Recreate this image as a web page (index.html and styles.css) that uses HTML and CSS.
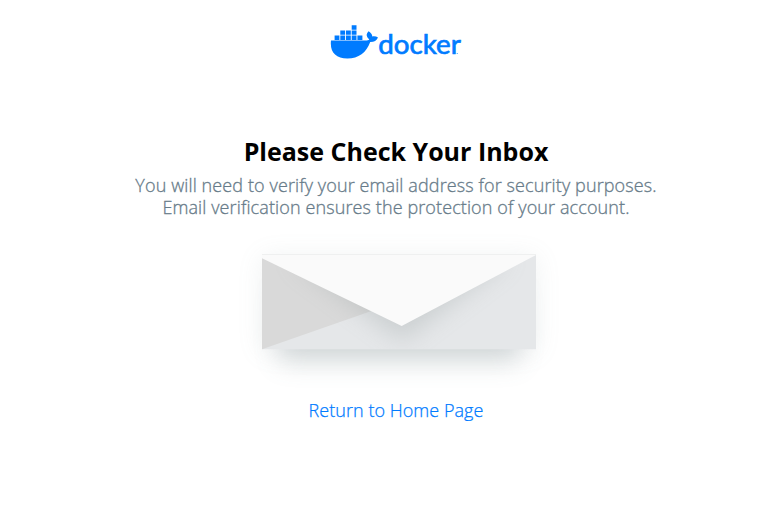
FILE: index.html
```html
<!DOCTYPE html>
<html lang="en">
<head>
<meta charset="utf-8">
<title>Please Check Your Inbox</title>
<link rel="stylesheet" href="styles.css">
</head>
<body>
<main class="page">
  <svg class="logo" width="132" height="36" viewBox="330 24 132 36" role="img" aria-label="docker">
    <g class="brand">
      <path d="M331 40.5H365.5C367.2 40.5 368.6 40.1 369.3 39.5C366 36.6 365.9 34.2 368.6 31.2C371.1 32.6 372.2 34.6 372.3 36.5C374.2 36 376.3 36.4 378 37.5C376.6 40.7 374 42.1 370.2 42C366.4 52.7 358.6 58.5 347.4 58.5C335.6 58.5 329.7 52 331 40.5Z"/>
      <path d="M334.6 35.5h4.8v4.5h-4.8zM340.3 35.5h4.8v4.5h-4.8zM346 35.5h4.8v4.5H346zM351.7 35.5h4.8v4.5h-4.8zM357.4 35.5h5v4.5h-5zM340.3 30.4h4.8v4.4h-4.8zM346 30.4h4.8v4.4H346zM351.7 30.4h4.8v4.4h-4.8zM351.7 25.3h4.8v4.4h-4.8z"/>
      <text class="wordmark" x="378.3" y="54" textLength="82.5" lengthAdjust="spacingAndGlyphs">docker</text>
      <circle cx="457.2" cy="53.6" r=".5"/>
    </g>
  </svg>
  <h1 class="title">Please Check Your Inbox</h1>
  <p class="message">You will need to verify your email address for security purposes.<br>Email verification ensures the protection of your account.</p>
  <svg class="envelope" width="340" height="170" viewBox="230 230 340 170" aria-hidden="true">
    <defs>
      <filter id="soft" x="-30%" y="-60%" width="160%" height="220%"><feGaussianBlur stdDeviation="13"/></filter>
      <filter id="fold" x="-30%" y="-60%" width="160%" height="220%"><feGaussianBlur stdDeviation="12"/></filter>
      <clipPath id="body"><path d="M262 254H536V349H262Z"/></clipPath>
    </defs>
    <path class="halo" filter="url(#soft)" d="M262 257H536V352H262Z"/>
    <path class="shadow" filter="url(#soft)" d="M279 290H519V362H279Z"/>
    <path class="back" d="M262 254H536V349.3H262Z"/>
    <path class="side" d="M262 254V349.3L380 308Z"/>
    <g clip-path="url(#body)"><path class="fold-shadow" filter="url(#fold)" d="M289 257H512L402 341Z"/></g>
    <path class="flap" d="M262 254H536V255L401.7 326L262 258.3Z"/>
    <path class="edge" d="M262 254.5H536"/>
  </svg>
  <a class="home-link" href="#">Return to Home Page</a>
</main>
</body>
</html>
```
FILE: styles.css
```css
body {
  margin: 0;
  background: #fff;
  font-family: "Open Sans", sans-serif;
  overflow: hidden;
}
.page {
  display: flex;
  flex-direction: column;
  align-items: center;
  width: 792px;
  padding-top: 24px;
}
.logo { display: block; }
.brand { fill: #007bff; }
.wordmark { font: 400 26.5px Lato, sans-serif; stroke: #007bff; stroke-width: .7px; }
.title {
  margin: 74px 0 0;
  font-size: 25px;
  line-height: 34px;
  font-weight: 700;
  color: #000;
}
.message {
  margin: 6px 0 0;
  font-size: 18px;
  line-height: 22px;
  font-weight: 300;
  letter-spacing: .11px;
  -webkit-text-stroke: .3px #677b89;
  text-align: center;
  color: #677b89;
}
.envelope { display: block; margin: 12px 0 0 8px; }
.halo { fill: #829496; opacity: .12; }
.shadow { fill: #68797e; opacity: .25; }
.back { fill: #e5e7e9; }
.side { fill: #d9d9d9; }
.fold-shadow { fill: #808b8b; opacity: .26; }
.flap { fill: #fafafa; }
.edge { stroke: #eff0f0; fill: none; }
.home-link {
  margin-top: -1px;
  font-size: 18px;
  line-height: 22px;
  font-weight: 300;
  letter-spacing: .04px;
  -webkit-text-stroke: .25px #007bff;
  color: #007bff;
  text-decoration: none;
}
```
